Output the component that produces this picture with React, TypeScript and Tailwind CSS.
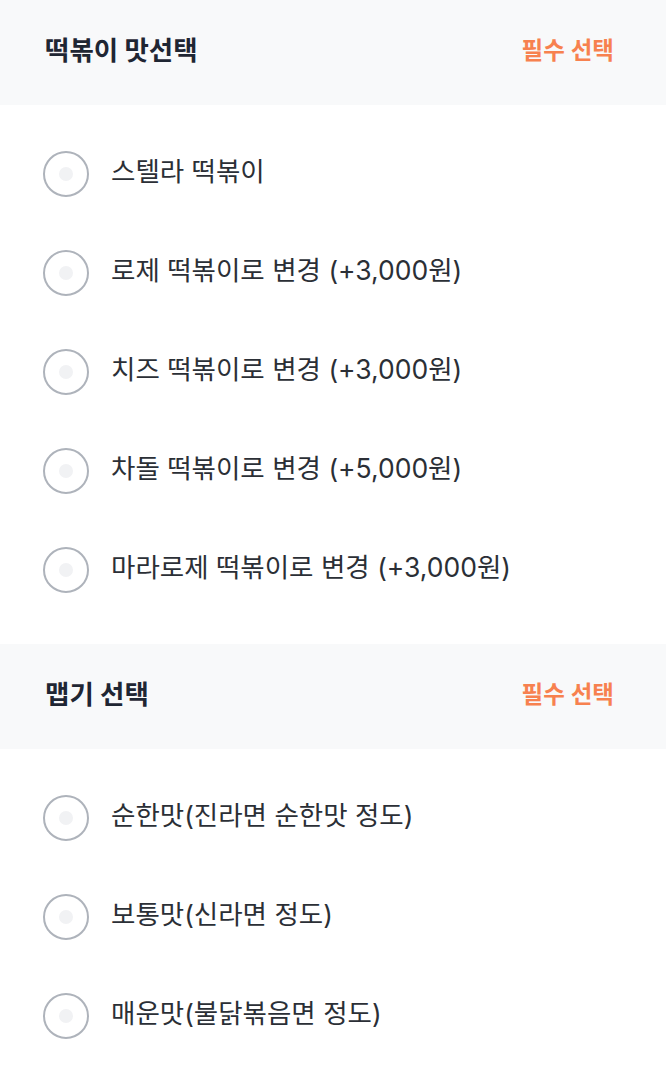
const groups = [
  {
    title: "떡볶이 맛선택",
    options: [
      "스텔라 떡볶이",
      "로제 떡볶이로 변경 (+3,000원)",
      "치즈 떡볶이로 변경 (+3,000원)",
      "차돌 떡볶이로 변경 (+5,000원)",
      "마라로제 떡볶이로 변경 (+3,000원)",
    ],
  },
  {
    title: "맵기 선택",
    options: [
      "순한맛(진라면 순한맛 정도)",
      "보통맛(신라면 정도)",
      "매운맛(불닭볶음면 정도)",
    ],
  },
];

function Radio() {
  return (
    <span className="flex h-[46px] w-[46px] shrink-0 items-center justify-center rounded-full border-2 border-[#aeb3bb] bg-white">
      <span className="h-[14px] w-[14px] rounded-full bg-[#f1f2f4]" />
    </span>
  );
}

export default function App() {
  return (
    <div className="min-h-[1070px] bg-white font-['Inter','Noto_Sans_CJK_KR',sans-serif]">
      {groups.map((g) => (
        <section key={g.title}>
          <div className="flex h-[105px] items-center justify-between bg-[#f8f9fa] pl-[45px] pr-[52px]">
            <h2 className="-mt-[4px] text-[26.5px] font-bold text-[#1f2633]">{g.title}</h2>
            <span className="-mt-[4px] text-[23.5px] font-semibold text-[#f7814f]">필수 선택</span>
          </div>
          <ul className="flex flex-col pb-[25px] pt-[19px]">
            {g.options.map((o) => (
              <li key={o} className="flex h-[99px] items-center gap-[22px] pl-[43px]">
                <Radio />
                <span className="-mt-[4px] text-[26.5px] text-[#2b2f36]">{o}</span>
              </li>
            ))}
          </ul>
        </section>
      ))}
    </div>
  );
}
